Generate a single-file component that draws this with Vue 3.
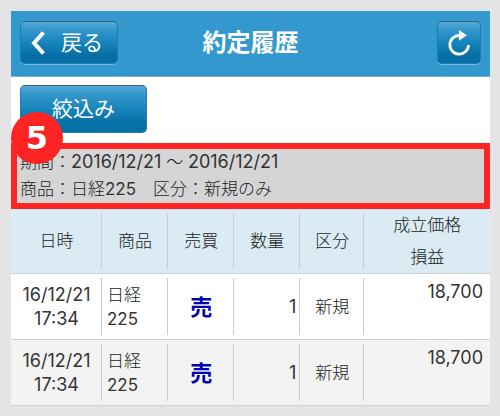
<template>
  <div class="screen">
    <header class="title-bar">
      <button type="button" class="btn back-btn">
        <svg class="chevron" viewBox="0 0 14 24" aria-hidden="true">
          <path d="M12.5 1.5 L3 12 L12.5 22.5" fill="none" stroke="#fff" stroke-width="4" />
        </svg>
        <span>戻る</span>
      </button>
      <h1 class="title">約定履歴</h1>
      <button type="button" class="btn reload-btn" aria-label="更新">
        <svg class="reload" viewBox="0 0 24 26" aria-hidden="true">
          <path d="M12.5 5.5 A9.3 9.3 0 1 0 21.5 15" fill="none" stroke="#fff" stroke-width="2.8" />
          <path d="M12 0 L19.8 5.2 L12 10.8 Z" fill="#fff" />
        </svg>
      </button>
    </header>

    <div class="toolbar">
      <button type="button" class="btn filter-btn">絞込み</button>
    </div>

    <section class="summary">
      <span class="step">5</span>
      <p>期間：<span class="num">2016/12/21</span> ～ <span class="num">2016/12/21</span></p>
      <p>商品：日経<span class="code">225</span>　区分：新規のみ</p>
    </section>

    <table class="history">
      <colgroup>
        <col class="col-date" />
        <col class="col-item" />
        <col class="col-side" />
        <col class="col-qty" />
        <col class="col-kind" />
        <col />
      </colgroup>
      <thead>
        <tr>
          <th>日時</th>
          <th>商品</th>
          <th>売買</th>
          <th>数量</th>
          <th>区分</th>
          <th class="price-head">成立価格<br />損益</th>
        </tr>
      </thead>
      <tbody>
        <tr v-for="trade in trades" :key="trade.id">
          <td class="num">{{ trade.date }}<br />{{ trade.time }}</td>
          <td class="item">{{ trade.item }}<br /><span class="code">{{ trade.code }}</span></td>
          <td class="side">{{ trade.side }}</td>
          <td class="qty num">{{ trade.qty }}</td>
          <td class="kind">{{ trade.kind }}</td>
          <td class="price num">{{ trade.price }}</td>
        </tr>
      </tbody>
    </table>
  </div>
</template>

<script setup>
import { ref } from 'vue';

const trades = ref([
  { id: 1, date: '16/12/21', time: '17:34', item: '日経', code: '225', side: '売', qty: 1, kind: '新規', price: '18,700' },
  { id: 2, date: '16/12/21', time: '17:34', item: '日経', code: '225', side: '売', qty: 1, kind: '新規', price: '18,700' },
]);
</script>

<style>
body {
  margin: 0;
  background: #e4e4e4;
}
</style>

<style scoped>
.screen {
  margin: 11px 10px 11px 11px;
  font-family: 'Inter', 'Noto Sans CJK JP', sans-serif;
  font-size: 17px;
  font-weight: 300;
  color: #222;
  background: #fff;
}

.title-bar {
  display: flex;
  align-items: center;
  justify-content: space-between;
  position: relative;
  padding: 10px 9px 12px;
  background: #3398ce;
  border-bottom: 1px solid #78b4d4;
}

.title {
  margin: 0;
  position: absolute;
  left: 0;
  right: 0;
  text-align: center;
  font-size: 24px;
  line-height: 32px;
  font-weight: 700;
  color: #fff;
  pointer-events: none;
}

.btn {
  display: flex;
  align-items: center;
  justify-content: center;
  box-sizing: border-box;
  margin: 0;
  padding: 0;
  border: 1px solid #1d7cb0;
  border-top-color: #35617c;
  border-radius: 5px;
  background: linear-gradient(#58aad8 0%, #3397cc 18%, #1482b9 55%, #066fa5 80%, #066fa5 100%);
  box-shadow: 0 1px 0 #74b8dc;
  font-family: inherit;
  font-size: 21px;
  font-weight: 400;
  line-height: 28px;
  color: #fff;
  cursor: pointer;
}

.back-btn {
  width: 98px;
  height: 43px;
  padding-right: 4px;
  gap: 16px;
}

.chevron {
  width: 14px;
  height: 24px;
}

.reload-btn {
  width: 44px;
  height: 43px;
}

.reload {
  width: 24px;
  height: 26px;
}

.toolbar {
  padding: 8px 9px 10px;
}

.filter-btn {
  width: 127px;
  height: 48px;
  box-shadow: none;
}

.summary {
  position: relative;
  padding: 0 3px;
  border: 6px solid #ff2424;
  background: #d5d5d5;
}

.summary p {
  margin: 0;
  line-height: 27px;
}

.num,
.code {
  font-weight: 400;
  color: #333;
}

.num {
  font-size: 18px;
}

.summary .num {
  line-height: 20px;
}

.step {
  position: absolute;
  left: -6px;
  top: -37px;
  width: 52px;
  height: 52px;
  border-radius: 50%;
  background: #ff2424;
  color: #fff;
  font-family: 'DejaVu Sans', sans-serif;
  font-size: 32px;
  font-weight: 700;
  line-height: 52px;
  text-align: center;
}

.history {
  width: 100%;
  table-layout: fixed;
  border-collapse: separate;
  border-spacing: 0;
}

.col-date {
  width: 19%;
}

.col-item,
.col-side,
.col-qty {
  width: 13.8%;
}

.col-kind {
  width: 13.4%;
}

.history th,
.history td {
  height: 65px;
  padding: 0;
  border-bottom: 1px solid #ccd3d8;
  background: linear-gradient(#c8cdd0, #c8cdd0) no-repeat right center / 1px calc(100% - 8px);
  text-align: center;
  line-height: 24px;
}

.history th:last-child,
.history td:last-child {
  background: none;
}

.history th {
  height: 64px;
  font-weight: 300;
}

.history .price-head {
  line-height: 32px;
}

.history thead tr {
  background: #daebf4;
}

.history tbody tr:nth-child(even) {
  background: #f3f3f3;
}

.history .item {
  padding-left: 5px;
  text-align: left;
}

.history .side {
  font-size: 22px;
  font-weight: 700;
  color: #0000b0;
}

.history .qty {
  padding-right: 4px;
  text-align: right;
}

.history .price {
  padding: 6px 7px 0 0;
  height: 59px;
  text-align: right;
  vertical-align: top;
}
</style>
